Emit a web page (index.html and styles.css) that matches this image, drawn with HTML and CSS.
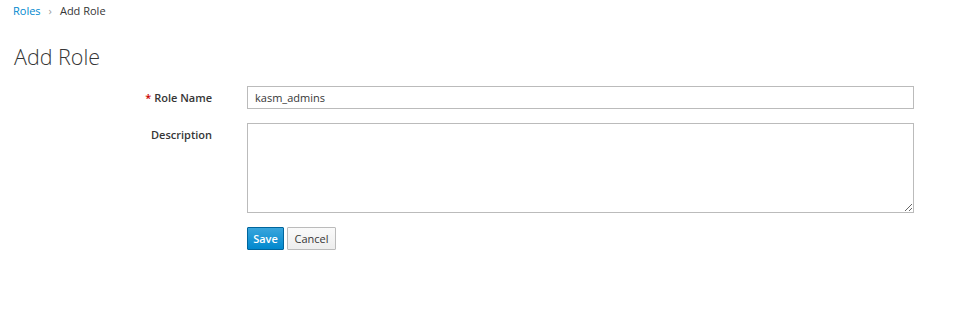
FILE: index.html
```html
<!DOCTYPE html>
<html>
<head>
<meta charset="utf-8">
<link rel="stylesheet" href="styles.css">
</head>
<body>
<div class="page">
  <ol class="crumbs">
    <li><a href="#">Roles</a></li>
    <li class="sep">›</li>
    <li class="current">Add Role</li>
  </ol>
  <h1 class="title">Add Role</h1>
  <form class="form">
    <div class="row">
      <label class="label"><span class="req">*</span> Role Name</label>
      <div class="field"><input class="input" type="text" value="kasm_admins"></div>
    </div>
    <div class="row">
      <label class="label">Description</label>
      <div class="field"><textarea class="textarea"></textarea></div>
    </div>
    <div class="row">
      <div></div>
      <div class="buttons">
        <button type="button" class="btn btn-primary">Save</button>
        <button type="button" class="btn btn-default">Cancel</button>
      </div>
    </div>
  </form>
</div>
</body>
</html>
```
FILE: styles.css
```css
html, body { margin: 0; padding: 0; background: #fff; }
body {
  font-family: "Open Sans", "Liberation Sans", sans-serif;
  font-size: 11px;
  color: #363636;
}
.page { padding: 0 13px; }
.crumbs {
  list-style: none;
  margin: 0;
  padding: 2px 0 0 0;
  display: flex;
  gap: 8px;
  height: 19px;
  line-height: 17px;
}
.crumbs a { color: #0088ce; text-decoration: none; }
.crumbs .sep { color: #9c9c9c; }
.crumbs .current { color: #363636; }
.title {
  margin: 22px 0 0 1px;
  font-family: "Open Sans Light", "Open Sans", sans-serif;
  font-size: 21.5px;
  font-weight: 300;
  line-height: 28px;
  color: #363636;
}
.form { margin-top: 15px; }
.row {
  display: grid;
  grid-template-columns: 199px 667px;
  column-gap: 35px;
  margin-bottom: 14px;
}
.label {
  text-align: right;
  font-weight: 600;
  padding-top: 5px;
  line-height: 14px;
}
.req { color: #c00; }
.input {
  box-sizing: border-box;
  width: 100%;
  height: 23px;
  border: 1px solid #bbb;
  padding: 2px 7px;
  font-family: inherit;
  font-size: 11px;
  color: #363636;
  outline: none;
  display: block;
}
.textarea {
  box-sizing: border-box;
  width: 100%;
  height: 90px;
  border: 1px solid #bbb;
  padding: 2px 6px;
  font-family: inherit;
  font-size: 11px;
  display: block;
  resize: both;
}
.buttons { display: flex; gap: 3px; }
.btn {
  box-sizing: border-box;
  height: 23px;
  font-family: inherit;
  font-size: 11px;
  font-weight: 600;
  padding: 0 4px;
  border-radius: 1px;
  cursor: pointer;
}
.btn-primary {
  color: #fff;
  background: linear-gradient(#39a5dc, #0088ce);
  border: 1px solid #00659c;
  width: 37px;
}
.btn-default {
  color: #363636;
  font-weight: 400;
  background: linear-gradient(#fafafa, #ededed);
  border: 1px solid #bbb;
  width: 49px;
}
```
